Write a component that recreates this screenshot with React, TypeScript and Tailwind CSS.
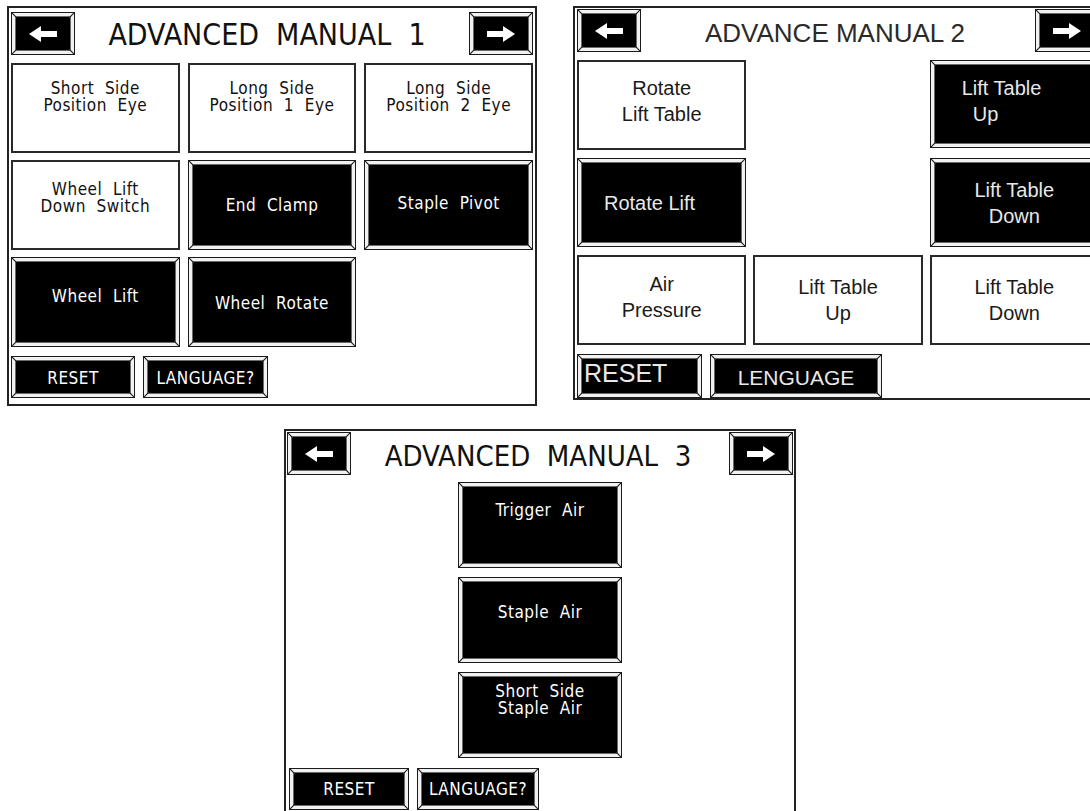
import React from "react";

const HMI =
  "font-[family-name:Liberation_Sans_Narrow,DejaVu_Sans_Condensed,Roboto_Condensed,Liberation_Sans,sans-serif]";
const ARIAL = "font-[family-name:Liberation_Sans,Arial,sans-serif]";

function Corners() {
  const tick = (
    <svg width="5" height="5" viewBox="0 0 5 5">
      <line x1="0" y1="0" x2="5" y2="5" stroke="#222" strokeWidth="1.2" />
    </svg>
  );
  return (
    <>
      <span className="absolute left-0 top-0">{tick}</span>
      <span className="absolute right-0 top-0 -scale-x-100">{tick}</span>
      <span className="absolute left-0 bottom-0 -scale-y-100">{tick}</span>
      <span className="absolute right-0 bottom-0 -scale-100">{tick}</span>
    </>
  );
}

function BlackBtn({
  children,
  className = "",
  inner = "",
}: {
  children?: React.ReactNode;
  className?: string;
  inner?: string;
}) {
  return (
    <div className={`relative border border-[#1a1a1a] bg-[#f2f2f2] p-[3px] ${className}`}>
      <div className={`h-full w-full bg-black border border-[#6a6a6a] flex ${inner}`}>{children}</div>
      <Corners />
    </div>
  );
}

function WhiteBtn({
  children,
  className = "",
  inner = "",
}: {
  children?: React.ReactNode;
  className?: string;
  inner?: string;
}) {
  return (
    <div className={`border-2 border-[#2a2a2a] bg-white flex ${inner} ${className}`}>{children}</div>
  );
}

function Arrow({ dir }: { dir: "left" | "right" }) {
  return (
    <svg
      width="28"
      height="16"
      viewBox="0 0 28 16"
      className={dir === "right" ? "-scale-x-100" : ""}
    >
      <polygon points="0,8 12,0 12,5 28,5 28,11 12,11 12,16" fill="white" />
    </svg>
  );
}

function ArrowBtn({ dir, className = "" }: { dir: "left" | "right"; className?: string }) {
  return (
    <BlackBtn className={`w-[64px] h-[43px] shrink-0 ${className}`} inner="items-center justify-center">
      <Arrow dir={dir} />
    </BlackBtn>
  );
}

function Label({ children, className = "" }: { children: React.ReactNode; className?: string }) {
  return (
    <span className={`whitespace-pre text-center leading-[17px] text-[17px] tracking-[0.5px] ${className}`}>
      {children}
    </span>
  );
}

function Panel1() {
  return (
    <div className={`w-[530px] h-[400px] shrink-0 border-2 border-[#222] bg-white flex flex-col px-[2px] pt-[4px] ${HMI}`}>
      <div className="flex items-center justify-between h-[43px]">
        <ArrowBtn dir="left" />
        <span className="whitespace-pre text-[30px] text-[#111] leading-none pt-[2px] pr-[10px]">
          {"ADVANCED  MANUAL  1"}
        </span>
        <ArrowBtn dir="right" />
      </div>
      <div className="grid grid-cols-3 gap-x-[8px] gap-y-[7px] mt-[8px]">
        <WhiteBtn className="h-[90px]" inner="items-center justify-center pb-[22px]">
          <Label className="text-[#111]">{"Short  Side\nPosition  Eye"}</Label>
        </WhiteBtn>
        <WhiteBtn className="h-[90px]" inner="items-center justify-center pb-[22px]">
          <Label className="text-[#111]">{"Long  Side\nPosition  1  Eye"}</Label>
        </WhiteBtn>
        <WhiteBtn className="h-[90px]" inner="items-center justify-center pb-[22px]">
          <Label className="text-[#111]">{"Long  Side\nPosition  2  Eye"}</Label>
        </WhiteBtn>

        <WhiteBtn className="h-[90px]" inner="items-center justify-center pb-[14px]">
          <Label className="text-[#111]">{"Wheel  Lift\nDown  Switch"}</Label>
        </WhiteBtn>
        <BlackBtn className="h-[90px]" inner="items-center justify-center">
          <Label className="text-white">{"End  Clamp"}</Label>
        </BlackBtn>
        <BlackBtn className="h-[90px]" inner="items-center justify-center pb-[4px]">
          <Label className="text-white">{"Staple  Pivot"}</Label>
        </BlackBtn>

        <BlackBtn className="h-[90px]" inner="items-center justify-center pb-[12px]">
          <Label className="text-white">{"Wheel  Lift"}</Label>
        </BlackBtn>
        <BlackBtn className="h-[90px]" inner="items-center justify-center pt-[2px]">
          <Label className="text-white">{"Wheel  Rotate"}</Label>
        </BlackBtn>
        <div />
      </div>
      <div className="flex gap-[8px] mt-[9px]">
        <BlackBtn className="w-[124px] h-[42px]" inner="items-center justify-center pt-[2px]">
          <Label className="text-white">RESET</Label>
        </BlackBtn>
        <BlackBtn className="w-[125px] h-[42px]" inner="items-center justify-center pt-[2px]">
          <Label className="text-white">LANGUAGE?</Label>
        </BlackBtn>
      </div>
    </div>
  );
}

function P2Label({ children, className = "" }: { children: React.ReactNode; className?: string }) {
  return (
    <span className={`whitespace-pre leading-[26px] text-[20px] ${className}`}>{children}</span>
  );
}

function Panel2() {
  return (
    <div className={`w-[530px] h-[394px] shrink-0 border-2 border-[#222] bg-white flex flex-col px-[2px] pt-[1px] ${ARIAL}`}>
      <div className="flex items-center justify-between h-[43px]">
        <ArrowBtn dir="left" />
        <span className="text-[26px] text-[#2a2a2a] leading-none pr-[6px] pt-[4px]">ADVANCE MANUAL 2</span>
        <ArrowBtn dir="right" />
      </div>
      <div className="grid grid-cols-3 gap-x-[7px] gap-y-[8px] mt-[8px]">
        <WhiteBtn className="h-[90px]" inner="items-center justify-center pb-[8px]">
          <P2Label className="text-[#1a1a1a] text-center">{"Rotate\nLift Table"}</P2Label>
        </WhiteBtn>
        <div />
        <BlackBtn className="h-[88px]" inner="items-center pl-[27px] pb-[6px]">
          <P2Label className="text-[#e8e8e8]">{"Lift Table\n  Up"}</P2Label>
        </BlackBtn>

        <BlackBtn className="h-[89px]" inner="items-center pl-[22px]">
          <P2Label className="text-[#e8e8e8]">Rotate Lift</P2Label>
        </BlackBtn>
        <div />
        <BlackBtn className="h-[89px]" inner="items-center justify-center">
          <P2Label className="text-[#e8e8e8] text-center">{"Lift Table\nDown"}</P2Label>
        </BlackBtn>

        <WhiteBtn className="h-[90px]" inner="items-center justify-center pb-[6px]">
          <P2Label className="text-[#1a1a1a] text-center">{"Air\nPressure"}</P2Label>
        </WhiteBtn>
        <WhiteBtn className="h-[90px]" inner="items-center justify-center">
          <P2Label className="text-[#1a1a1a] text-center">{"Lift Table\nUp"}</P2Label>
        </WhiteBtn>
        <WhiteBtn className="h-[90px]" inner="items-center justify-center">
          <P2Label className="text-[#1a1a1a] text-center">{"Lift Table\nDown"}</P2Label>
        </WhiteBtn>
      </div>
      <div className="flex gap-[8px] mt-[9px]">
        <BlackBtn className="w-[125px] h-[44px]" inner="items-center pl-[2px] pb-[6px]">
          <span className="text-[25px] text-[#e8e8e8] leading-none">RESET</span>
        </BlackBtn>
        <BlackBtn className="w-[172px] h-[44px]" inner="items-center justify-center pt-[2px]">
          <span className="text-[21px] text-[#e8e8e8] leading-none">LENGUAGE</span>
        </BlackBtn>
      </div>
    </div>
  );
}

function Panel3() {
  return (
    <div className={`w-[512px] h-[400px] shrink-0 border-2 border-[#222] bg-white flex flex-col px-[1px] pt-[1px] ${HMI}`}>
      <div className="flex items-center justify-between h-[43px]">
        <ArrowBtn dir="left" />
        <span className="whitespace-pre text-[29px] text-[#111] leading-none pt-[6px] pr-[4px]">
          {"ADVANCED  MANUAL  3"}
        </span>
        <ArrowBtn dir="right" />
      </div>
      <div className="flex flex-col items-center gap-[9px] mt-[7px]">
        <BlackBtn className="w-[164px] h-[86px]" inner="items-center justify-center pb-[30px]">
          <Label className="text-white">{"Trigger  Air"}</Label>
        </BlackBtn>
        <BlackBtn className="w-[164px] h-[86px]" inner="items-center justify-center pb-[16px]">
          <Label className="text-white">{"Staple  Air"}</Label>
        </BlackBtn>
        <BlackBtn className="w-[164px] h-[86px]" inner="items-center justify-center pb-[30px]">
          <Label className="text-white">{"Short  Side\nStaple  Air"}</Label>
        </BlackBtn>
      </div>
      <div className="flex gap-[8px] mt-[10px] pl-[2px]">
        <BlackBtn className="w-[120px] h-[42px]" inner="items-center justify-center">
          <Label className="text-white">RESET</Label>
        </BlackBtn>
        <BlackBtn className="w-[122px] h-[42px]" inner="items-center justify-center">
          <Label className="text-white">LANGUAGE?</Label>
        </BlackBtn>
      </div>
    </div>
  );
}

export default function App() {
  return (
    <div className="w-[1090px] h-[811px] overflow-hidden bg-white">
      <div className="flex items-start pt-[6px] pl-[7px] gap-[36px] w-[1200px]">
        <Panel1 />
        <Panel2 />
      </div>
      <div className="pl-[284px] pt-[23px]">
        <Panel3 />
      </div>
    </div>
  );
}
